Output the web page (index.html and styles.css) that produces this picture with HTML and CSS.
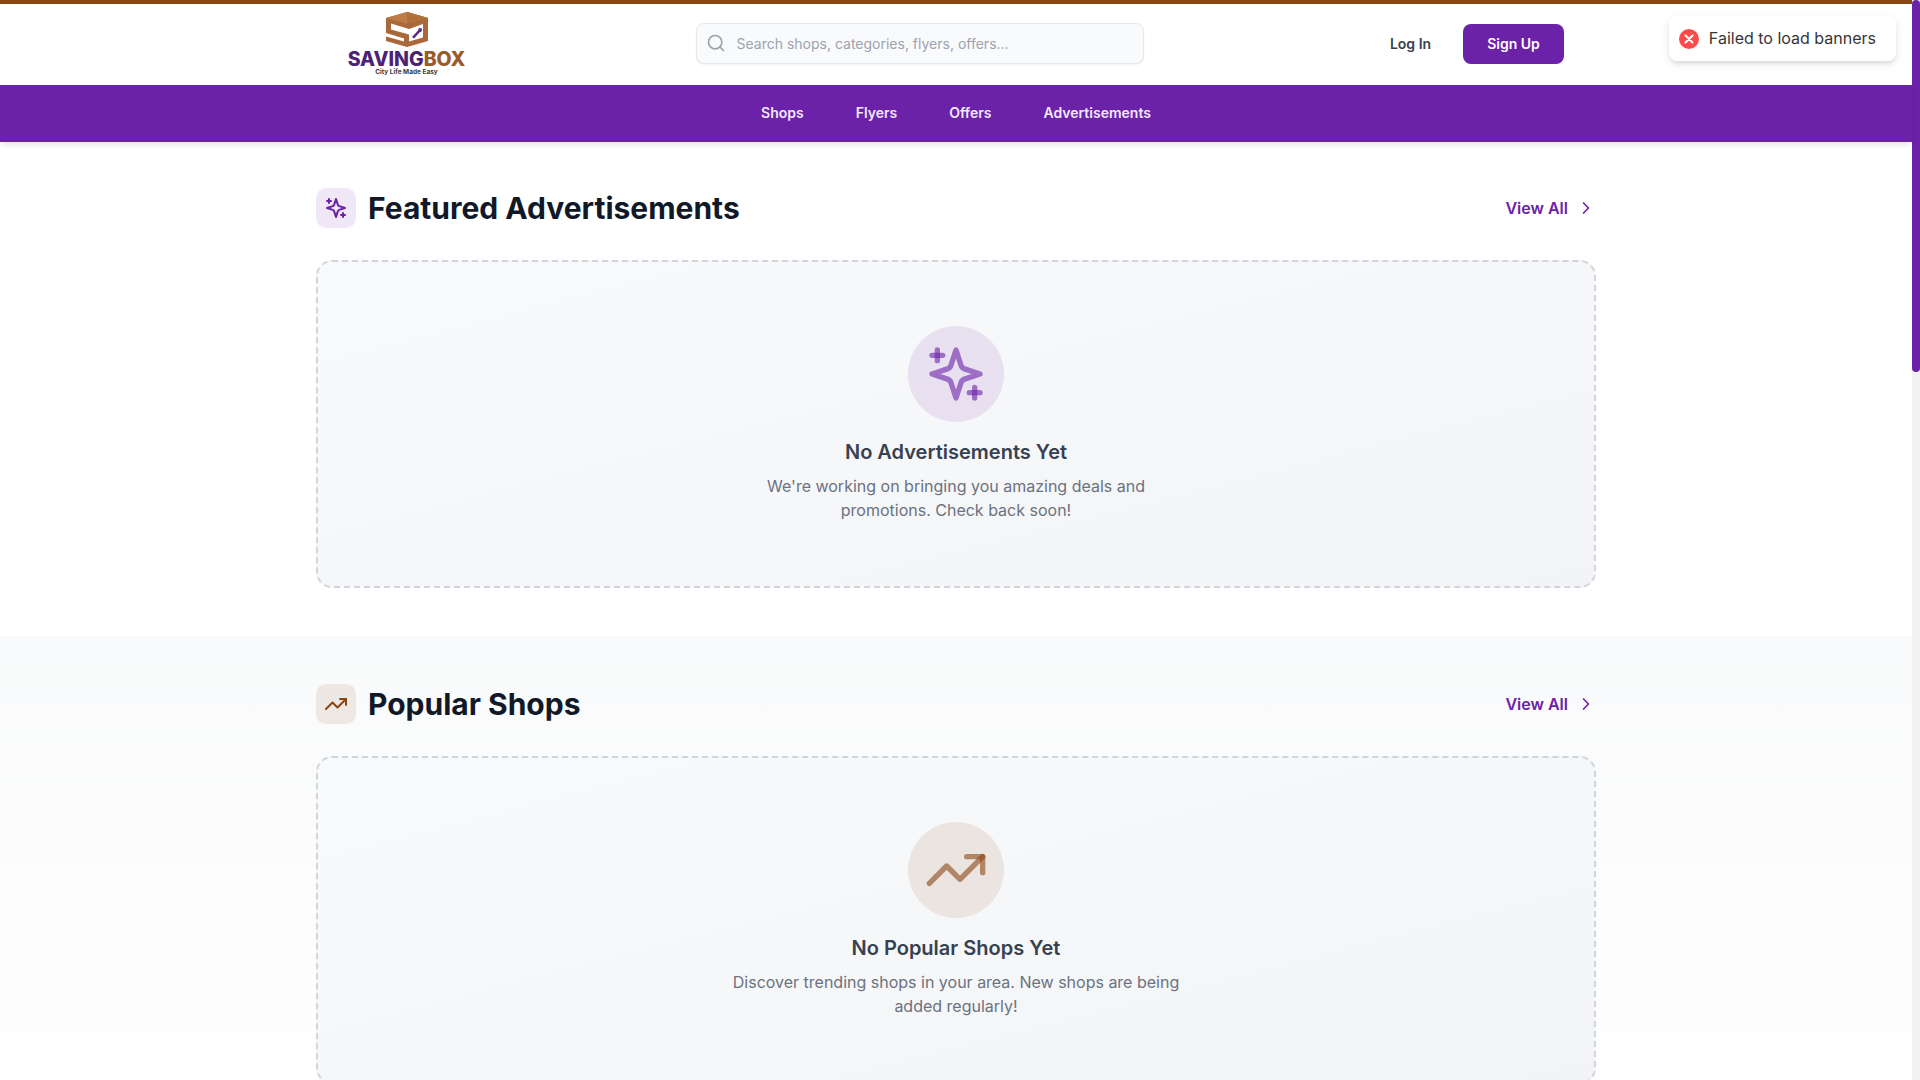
FILE: index.html
```html
<!DOCTYPE html>
<html lang="en">
<head>
    <meta charset="UTF-8">
    <meta name="viewport" content="width=device-width, initial-scale=1.0">
    <title>SavingBox</title>
    <link rel="stylesheet" href="styles.css">
</head>
<body>
<div class="page">
    <div class="page-main">
        <header class="header">
            <div class="header-inner">
                <a class="logo" href="#">
                    <svg class="logo-box" viewBox="0 0 42 35" width="42" height="35">
                        <path d="M21 0 42 6v23L21 35 0 29v-4.500V6z" fill="#a9683a"/>
                        <path d="M0 6 21 0l21 6-21 5.500z" fill="#bb7c48"/>
                        <path d="M21 0v11.500L42 6z" fill="#b07038"/>
                        <path d="m5 11.500 18 5.500 14-5v13.500L23 29.500V22.500L5 17.500z" fill="#fff"/>
                        <path d="m0 21 18 5.500v3L0 24.500z" fill="#fff"/>
                        <path d="m26 25 6-6.500 1-2.500 3 .5-.5 3-2 1-5.500 6z" fill="#5b2a86"/>
                    </svg>
                    <span class="logo-name">SAVING<span class="logo-name-alt">BOX</span></span>
                    <span class="logo-tag">City Life Made Easy</span>
                </a>
                <div class="search-wrap">
                    <div class="search">
                        <svg class="search-icon" viewBox="0 0 24 24" width="20" height="20">
                            <circle cx="11" cy="11" r="8"/>
                            <path d="m21 21-4.300-4.300"/>
                        </svg>
                        <input type="text" placeholder="Search shops, categories, flyers, offers...">
                    </div>
                </div>
                <div class="auth">
                    <button class="btn-login">Log In</button>
                    <button class="btn-signup">Sign Up</button>
                </div>
            </div>
        </header>

        <nav class="nav">
            <a href="#">Shops</a>
            <a href="#">Flyers</a>
            <a href="#">Offers</a>
            <a href="#">Advertisements</a>
        </nav>

        <section class="section section-featured">
            <div class="container">
                <div class="section-head">
                    <div class="section-title">
                        <span class="title-icon icon-purple">
                            <svg viewBox="0 0 24 24" width="24" height="24">
                                <path d="m12 3-1.912 5.813a2 2 0 0 1-1.275 1.275L3 12l5.813 1.912a2 2 0 0 1 1.275 1.275L12 21l1.912-5.813a2 2 0 0 1 1.275-1.275L21 12l-5.813-1.912a2 2 0 0 1-1.275-1.275L12 3Z"/>
                                <path d="M5 3v4"/><path d="M19 17v4"/><path d="M3 5h4"/><path d="M17 19h4"/>
                            </svg>
                        </span>
                        <h2>Featured Advertisements</h2>
                    </div>
                    <a class="view-all" href="#">View All
                        <svg viewBox="0 0 24 24" width="20" height="20"><path d="m9 18 6-6-6-6"/></svg>
                    </a>
                </div>
                <div class="empty">
                    <div class="empty-icon icon-purple">
                        <svg viewBox="0 0 24 24" width="64" height="64">
                            <path d="m12 3-1.912 5.813a2 2 0 0 1-1.275 1.275L3 12l5.813 1.912a2 2 0 0 1 1.275 1.275L12 21l1.912-5.813a2 2 0 0 1 1.275-1.275L21 12l-5.813-1.912a2 2 0 0 1-1.275-1.275L12 3Z"/>
                            <path d="M5 3v4"/><path d="M19 17v4"/><path d="M3 5h4"/><path d="M17 19h4"/>
                        </svg>
                    </div>
                    <h3>No Advertisements Yet</h3>
                    <p>We're working on bringing you amazing deals and promotions. Check back soon!</p>
                </div>
            </div>
        </section>

        <section class="section section-popular">
            <div class="container">
                <div class="section-head">
                    <div class="section-title">
                        <span class="title-icon icon-brown">
                            <svg viewBox="0 0 24 24" width="24" height="24">
                                <polyline points="22 7 13.500 15.500 8.500 10.500 2 17"/>
                                <polyline points="16 7 22 7 22 13"/>
                            </svg>
                        </span>
                        <h2>Popular Shops</h2>
                    </div>
                    <a class="view-all" href="#">View All
                        <svg viewBox="0 0 24 24" width="20" height="20"><path d="m9 18 6-6-6-6"/></svg>
                    </a>
                </div>
                <div class="empty">
                    <div class="empty-icon icon-brown">
                        <svg viewBox="0 0 24 24" width="64" height="64">
                            <polyline points="22 7 13.500 15.500 8.500 10.500 2 17"/>
                            <polyline points="16 7 22 7 22 13"/>
                        </svg>
                    </div>
                    <h3>No Popular Shops Yet</h3>
                    <p>Discover trending shops in your area. New shops are being added regularly!</p>
                </div>
            </div>
        </section>
    </div>

    <div class="scrollbar"><div class="scrollbar-thumb"></div></div>

    <div class="toast">
        <svg viewBox="0 0 20 20" width="20" height="20">
            <circle cx="10" cy="10" r="10" fill="#ff4b4b"/>
            <path d="m6.500 6.500 7 7M13.500 6.500l-7 7" stroke="#fff" stroke-width="2" stroke-linecap="round"/>
        </svg>
        <span>Failed to load banners</span>
    </div>
</div>
</body>
</html>
```

FILE: styles.css
```css
* {
    box-sizing: border-box;
}

html, body {
    margin: 0;
    height: 100%;
    overflow: hidden;
}

body {
    font-family: Inter, "Liberation Sans", sans-serif;
    background: #fff;
    color: #111827;
}

a {
    text-decoration: none;
}

svg {
    display: block;
    fill: none;
    stroke-linecap: round;
    stroke-linejoin: round;
}

.page {
    display: flex;
    height: 100vh;
    position: relative;
    overflow: hidden;
}

.page-main {
    flex: 1;
    min-width: 0;
}

/* scrollbar */
.scrollbar {
    width: 8px;
    flex-shrink: 0;
    background: #f1f1f1;
}

.scrollbar-thumb {
    height: 372px;
    background: #6b21a8;
    border-radius: 4px;
}

/* header */
.header {
    background: #fff;
    border-top: 4px solid #8b4513;
    height: 85px;
}

.header-inner {
    max-width: 1280px;
    height: 100%;
    margin: 0 auto;
    padding: 0 32px 2px;
    display: flex;
    align-items: center;
}

.logo {
    width: 117px;
    flex-shrink: 0;
    display: flex;
    flex-direction: column;
    align-items: center;
    margin-top: 2px;
}

.logo-box {
    margin-bottom: 3px;
}

.logo-name {
    font-weight: 800;
    font-size: 19.5px;
    line-height: 18px;
    color: #4a2377;
    white-space: nowrap;
}

.logo-name-alt {
    color: #9a5b2a;
}

.logo-tag {
    font-weight: 700;
    font-size: 6.5px;
    line-height: 9px;
    color: #3a3a3a;
    white-space: nowrap;
}

.search-wrap {
    flex: 1;
    display: flex;
    justify-content: center;
}

.search {
    position: relative;
    width: 448px;
}

.search-icon {
    position: absolute;
    left: 10px;
    top: 10px;
    stroke: #9ca3af;
    stroke-width: 2;
}

.search input {
    display: block;
    width: 100%;
    height: 41px;
    padding: 0 16px 0 40px;
    font-family: inherit;
    font-size: 14px;
    background: #f9fafb;
    border: 1px solid #e5e7eb;
    border-radius: 8px;
    box-shadow: 0 1px 2px rgba(0, 0, 0, 0.05);
}

.search input::placeholder {
    color: #9ca3af;
    opacity: 1;
}

.auth {
    display: flex;
    gap: 16px;
    align-items: center;
}

.auth button {
    font-family: inherit;
    font-size: 14px;
    font-weight: 600;
    height: 40px;
    border: none;
    border-radius: 8px;
    cursor: pointer;
}

.btn-login {
    width: 73px;
    color: #374151;
    background: none;
}

.btn-signup {
    width: 101px;
    color: #fff;
    background: #6b21a8;
}

/* nav */
.nav {
    height: 57px;
    padding-bottom: 2px;
    background: #6b21a8;
    box-shadow: 0 4px 6px -1px rgba(0, 0, 0, 0.1);
    display: flex;
    justify-content: center;
    align-items: center;
    gap: 52px;
    position: relative;
}

.nav a {
    color: #f3e8ff;
    font-size: 14px;
    font-weight: 600;
}

/* sections */
.section {
    padding: 48px 0;
}

.section-featured {
    padding-top: 46px;
}

.section-popular {
    background: linear-gradient(to bottom, #f9fafb, #fff);
}

.container {
    max-width: 1280px;
    margin: 0 auto;
}

.section-head {
    display: flex;
    justify-content: space-between;
    align-items: center;
    margin-bottom: 32px;
}

.section-title {
    display: flex;
    align-items: center;
    gap: 12px;
}

.section-title h2 {
    margin: 0;
    font-size: 30px;
    line-height: 36px;
    font-weight: 700;
    color: #111827;
}

.title-icon {
    width: 40px;
    height: 40px;
    border-radius: 10px;
    display: flex;
    align-items: center;
    justify-content: center;
}

.title-icon svg {
    stroke-width: 2;
}

.icon-purple {
    background: rgba(107, 33, 168, 0.1);
}

.icon-purple svg {
    stroke: #6b21a8;
}

.icon-brown {
    background: rgba(139, 69, 19, 0.1);
}

.icon-brown svg {
    stroke: #8b4513;
}

.view-all {
    display: flex;
    align-items: center;
    gap: 8px;
    color: #6b21a8;
    font-size: 16px;
    font-weight: 600;
}

.view-all svg {
    stroke: #6b21a8;
    stroke-width: 2;
}

.empty {
    border: 2px dashed #d1d5db;
    border-radius: 16px;
    background: linear-gradient(to bottom right, #f9fafb, #f3f4f6);
    padding: 64px 0;
    display: flex;
    flex-direction: column;
    align-items: center;
    text-align: center;
}

.empty-icon {
    width: 96px;
    height: 96px;
    border-radius: 50%;
    display: flex;
    align-items: center;
    justify-content: center;
    margin-bottom: 16px;
}

.empty-icon svg {
    stroke-width: 2;
    stroke-opacity: 0.6;
}

.empty h3 {
    margin: 0 0 8px;
    font-size: 20px;
    line-height: 28px;
    font-weight: 600;
    color: #374151;
}

.empty p {
    margin: 0;
    max-width: 448px;
    font-size: 16px;
    line-height: 24px;
    color: #6b7280;
}

/* toast */
.toast {
    position: absolute;
    top: 16px;
    right: 24px;
    display: flex;
    align-items: center;
    gap: 10px;
    padding: 12px 20px 12px 10px;
    background: #fff;
    border-radius: 8px;
    color: #363636;
    font-size: 16px;
    line-height: 21px;
    box-shadow: 0 3px 10px rgba(0, 0, 0, 0.1), 0 3px 3px rgba(0, 0, 0, 0.05);
}
```
